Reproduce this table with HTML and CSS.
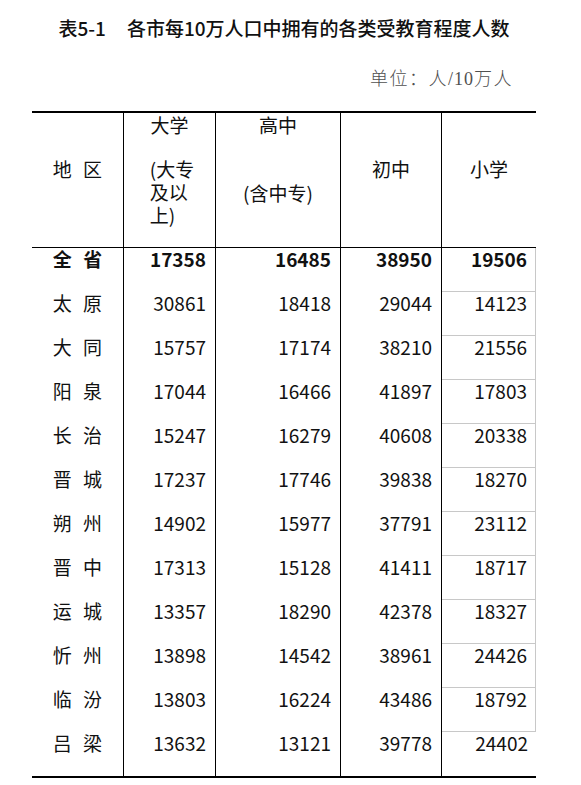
FILE: index.html
```html
<!DOCTYPE html>
<html lang="zh-CN">
<head>
<meta charset="utf-8">
<title>表5-1</title>
<link rel="stylesheet" href="styles.css">
</head>
<body>
<div class="page">
  <h1 class="title"><span class="tno">表5-1</span><span class="tname">各市每10万人口中拥有的各类受教育程度人数</span></h1>
  <div class="unit"><span class="cjk">单位：人</span>/10<span class="cjk">万人</span></div>
  <div class="table">
    <div class="thead">
      <div class="hc c1"><div class="mid">地 区</div></div>
      <div class="hc c2"><div class="top">大学</div><div class="wrap">(大专<br>及以<br>上)</div></div>
      <div class="hc c3"><div class="top">高中</div><div class="sub">(含中专)</div></div>
      <div class="hc c4"><div class="mid">初中</div></div>
      <div class="hc c5"><div class="mid">小学</div></div>
    </div>
    <div class="row total"><div class="c c1 name">全 省</div><div class="c c2">17358</div><div class="c c3">16485</div><div class="c c4">38950</div><div class="c c5">19506</div></div>
    <div class="row"><div class="c c1 name">太 原</div><div class="c c2">30861</div><div class="c c3">18418</div><div class="c c4">29044</div><div class="c c5">14123</div></div>
    <div class="row"><div class="c c1 name">大 同</div><div class="c c2">15757</div><div class="c c3">17174</div><div class="c c4">38210</div><div class="c c5">21556</div></div>
    <div class="row"><div class="c c1 name">阳 泉</div><div class="c c2">17044</div><div class="c c3">16466</div><div class="c c4">41897</div><div class="c c5">17803</div></div>
    <div class="row"><div class="c c1 name">长 治</div><div class="c c2">15247</div><div class="c c3">16279</div><div class="c c4">40608</div><div class="c c5">20338</div></div>
    <div class="row"><div class="c c1 name">晋 城</div><div class="c c2">17237</div><div class="c c3">17746</div><div class="c c4">39838</div><div class="c c5">18270</div></div>
    <div class="row"><div class="c c1 name">朔 州</div><div class="c c2">14902</div><div class="c c3">15977</div><div class="c c4">37791</div><div class="c c5">23112</div></div>
    <div class="row"><div class="c c1 name">晋 中</div><div class="c c2">17313</div><div class="c c3">15128</div><div class="c c4">41411</div><div class="c c5">18717</div></div>
    <div class="row"><div class="c c1 name">运 城</div><div class="c c2">13357</div><div class="c c3">18290</div><div class="c c4">42378</div><div class="c c5">18327</div></div>
    <div class="row"><div class="c c1 name">忻 州</div><div class="c c2">13898</div><div class="c c3">14542</div><div class="c c4">38961</div><div class="c c5">24426</div></div>
    <div class="row"><div class="c c1 name">临 汾</div><div class="c c2">13803</div><div class="c c3">16224</div><div class="c c4">43486</div><div class="c c5">18792</div></div>
    <div class="row last"><div class="c c1 name">吕 梁</div><div class="c c2">13632</div><div class="c c3">13121</div><div class="c c4">39778</div><div class="c c5">24402</div></div>
  </div>
</div>
</body>
</html>
```
FILE: styles.css
```css
html, body {
  margin: 0;
  padding: 0;
  background: #ffffff;
}
body {
  font-family: "Noto Sans CJK SC", "Noto Sans", sans-serif;
  color: #111111;
}
.page {
  width: 504px;
  padding-left: 32px;
}
.title {
  margin: 13px 0 0 0;
  height: 30px;
  line-height: 30px;
  font-size: 19px;
  font-weight: 500;
  text-align: center;
  color: #111111;
  white-space: nowrap;
}
.tname {
  margin-left: 21px;
}
.unit {
  margin-top: 22px;
  height: 24px;
  line-height: 24px;
  text-align: right;
  padding-right: 23px;
  font-family: "Liberation Serif", "Noto Sans CJK SC", serif;
  font-size: 18px;
  color: #505050;
  letter-spacing: 1px;
  white-space: nowrap;
}
.unit .cjk {
  font-family: "Noto Sans CJK SC", sans-serif;
  font-weight: 300;
  font-size: 18px;
  letter-spacing: 1.5px;
}
.table {
  margin-top: 22px;
  width: 504px;
  border-top: 2px solid #000000;
  border-bottom: 2px solid #000000;
}
.thead, .row {
  display: grid;
  grid-template-columns: 92px 92px 125px 101px 94px;
}
.thead {
  height: 134px;
  border-bottom: 1px solid #000000;
}
.hc, .c {
  box-sizing: border-box;
}
.c1, .c2, .c3, .c4 {
  border-right: 1px solid #000000;
}
.hc {
  font-size: 19px;
  line-height: 23px;
  text-align: center;
}
.hc .top {
  padding-top: 0;
}
.hc .mid {
  padding-top: 44px;
}
.name, .hc .mid {
  word-spacing: 7px;
}
.hc .wrap {
  display: inline-block;
  text-align: left;
  margin-top: 21px;
  margin-left: 5px;
}
.hc .sub {
  margin-top: 45px;
}
.row {
  height: 44px;
}
.c {
  font-size: 19px;
  line-height: 22px;
  text-align: right;
  padding-right: 9px;
}
.c.c5 {
  padding-right: 8px;
  border-right: 1px solid #c8c8c8;
  border-bottom: 1px solid #c8c8c8;
}
.row.last .c5 {
  border-right: none;
  border-bottom: none;
}
.c.name {
  text-align: center;
  padding-right: 0;
}
.row.total .c {
  font-weight: 700;
}
```
